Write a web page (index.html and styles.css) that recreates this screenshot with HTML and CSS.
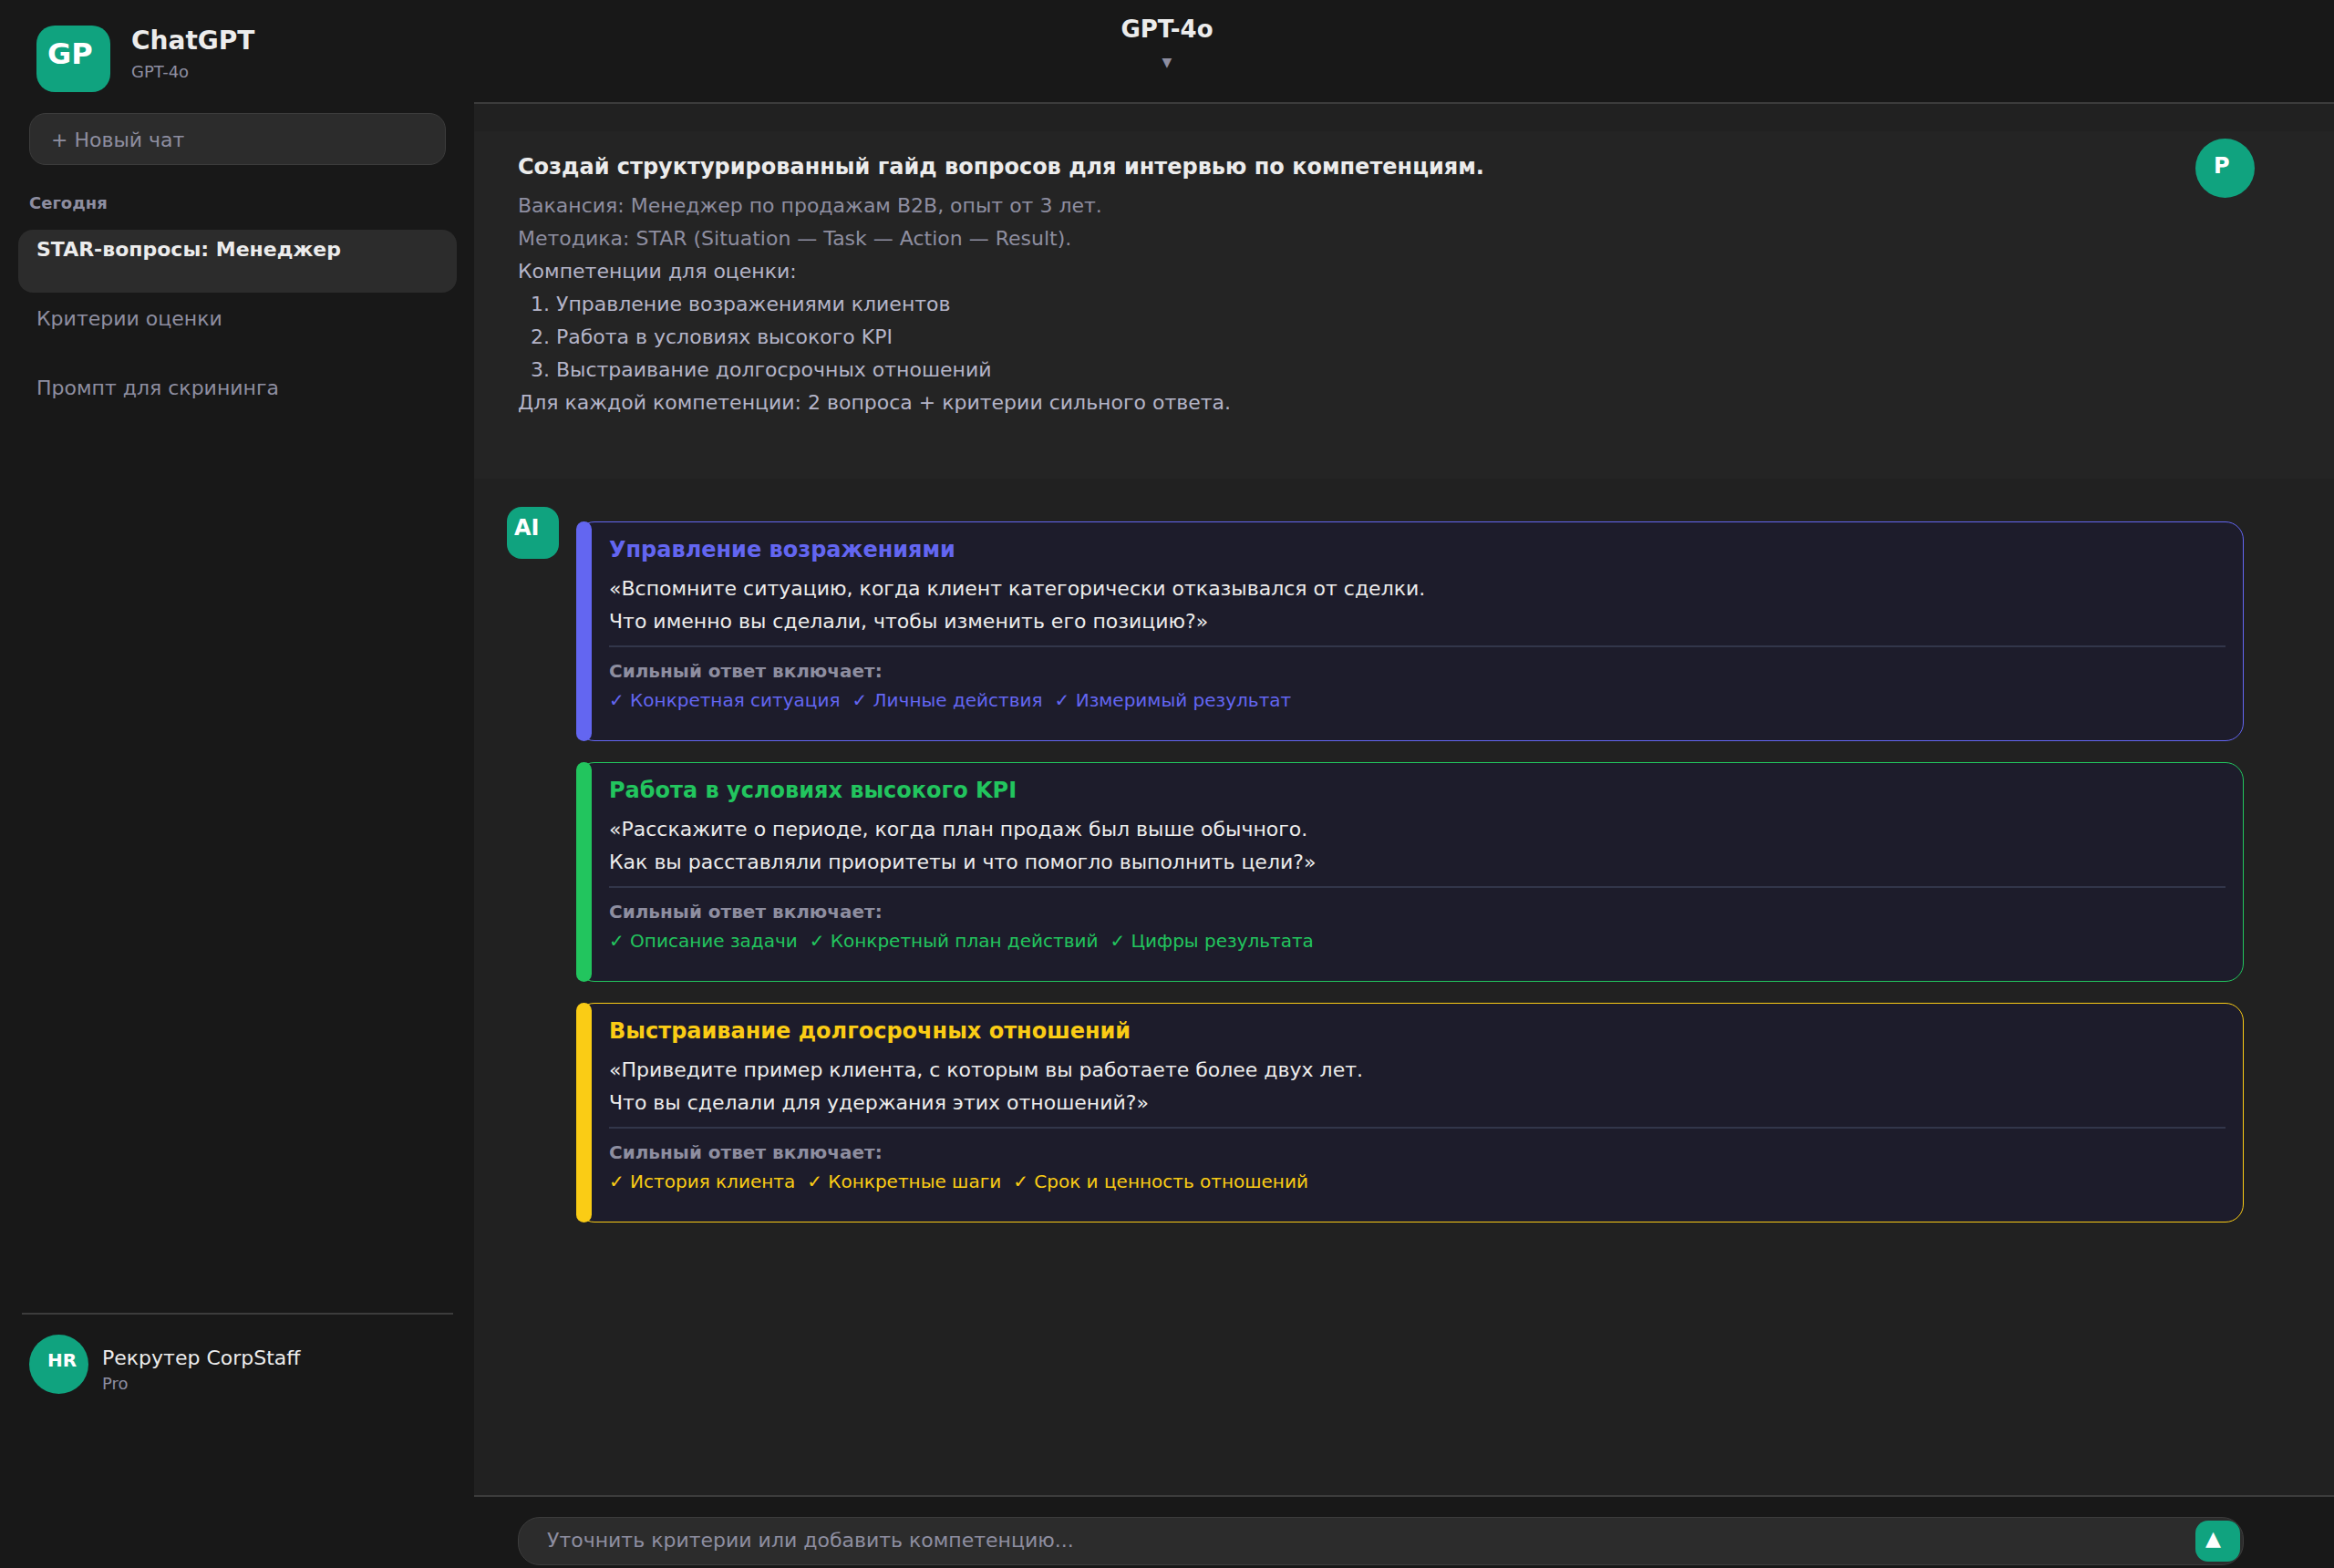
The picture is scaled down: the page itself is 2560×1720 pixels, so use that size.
FILE: index.html
```html
<!DOCTYPE html>
<html lang="ru">
<head>
<meta charset="utf-8">
<title>ChatGPT</title>
<link rel="stylesheet" href="styles.css">
</head>
<body>
<div class="app">
  <aside class="sidebar">
    <div class="brand">
      <div class="logo">GP</div>
      <div class="brand-text">
        <h1 class="brand-name">ChatGPT</h1>
        <p class="caption">GPT-4o</p>
      </div>
    </div>
    <button class="new-chat" type="button">+ Новый чат</button>
    <h2 class="group-title">Сегодня</h2>
    <nav class="chats">
      <a class="chat chat-active" href="#star">STAR-вопросы: Менеджер</a>
      <a class="chat" href="#criteria">Критерии оценки</a>
      <a class="chat" href="#screening">Промпт для скрининга</a>
    </nav>
    <div class="account">
      <div class="avatar avatar-account">HR</div>
      <div class="account-text">
        <p class="account-name">Рекрутер CorpStaff</p>
        <p class="caption">Pro</p>
      </div>
    </div>
  </aside>

  <main class="main">
    <header class="topbar">
      <button class="model" type="button">
        <span class="model-name">GPT-4o</span>
        <span class="model-arrow">▼</span>
      </button>
    </header>

    <div class="thread">
      <section class="prompt">
        <div class="prompt-text">
          <h2 class="prompt-title">Создай структурированный гайд вопросов для интервью по компетенциям.</h2>
          <p class="muted">Вакансия: Менеджер по продажам B2B, опыт от 3 лет.</p>
          <p class="muted">Методика: STAR (Situation — Task — Action — Result).</p>
          <p>Компетенции для оценки:</p>
          <ul class="prompt-list">
            <li>1. Управление возражениями клиентов</li>
            <li>2. Работа в условиях высокого KPI</li>
            <li>3. Выстраивание долгосрочных отношений</li>
          </ul>
          <p>Для каждой компетенции: 2 вопроса + критерии сильного ответа.</p>
        </div>
        <div class="avatar avatar-user">P</div>
      </section>

      <section class="answer">
        <div class="ai-badge">AI</div>
        <div class="cards">
          <article class="card indigo">
            <h3 class="card-title">Управление возражениями</h3>
            <p class="question">«Вспомните ситуацию, когда клиент категорически отказывался от сделки.<br>Что именно вы сделали, чтобы изменить его позицию?»</p>
            <h4 class="card-label">Сильный ответ включает:</h4>
            <ul class="checks">
              <li>✓ Конкретная ситуация</li>
              <li>✓ Личные действия</li>
              <li>✓ Измеримый результат</li>
            </ul>
          </article>
          <article class="card green">
            <h3 class="card-title">Работа в условиях высокого KPI</h3>
            <p class="question">«Расскажите о периоде, когда план продаж был выше обычного.<br>Как вы расставляли приоритеты и что помогло выполнить цели?»</p>
            <h4 class="card-label">Сильный ответ включает:</h4>
            <ul class="checks">
              <li>✓ Описание задачи</li>
              <li>✓ Конкретный план действий</li>
              <li>✓ Цифры результата</li>
            </ul>
          </article>
          <article class="card yellow">
            <h3 class="card-title">Выстраивание долгосрочных отношений</h3>
            <p class="question">«Приведите пример клиента, с которым вы работаете более двух лет.<br>Что вы сделали для удержания этих отношений?»</p>
            <h4 class="card-label">Сильный ответ включает:</h4>
            <ul class="checks">
              <li>✓ История клиента</li>
              <li>✓ Конкретные шаги</li>
              <li>✓ Срок и ценность отношений</li>
            </ul>
          </article>
        </div>
      </section>
    </div>

    <form class="composer">
      <div class="field">
        <input class="field-input" type="text" aria-label="Сообщение" placeholder="Уточнить критерии или добавить компетенцию...">
        <button class="send" type="button" aria-label="Отправить">▲</button>
      </div>
    </form>
  </main>
</div>
</body>
</html>
```
FILE: styles.css
```css
* {
  box-sizing: border-box;
}

body,
h1,
h2,
h3,
h4,
p,
ul {
  margin: 0;
  padding: 0;
}

ul {
  list-style: none;
}

body,
button,
input {
  font-family: "DejaVu Sans", sans-serif;
  font-size: 22px;
}

body {
  background: #212121;
  color: #ececec;
  line-height: 36px;
}

.app {
  display: grid;
  grid-template-columns: 520px 1fr;
  min-height: 100vh;
}

/* Sidebar */

.sidebar {
  display: flex;
  flex-direction: column;
  padding: 28px 19px 190px 20px;
  background: #181818;
}

.brand {
  display: flex;
  gap: 23px;
  padding: 0 20px;
}

.logo {
  width: 81px;
  height: 73px;
  padding: 13px 12px;
  border-radius: 20px;
  background: #10a37f;
  color: #fff;
  font-size: 32px;
  font-weight: bold;
  line-height: 36px;
}

.brand-text {
  padding-top: 1px;
}

.brand-name {
  font-size: 28px;
  line-height: 32px;
}

.caption {
  padding-top: 2px;
  color: #8e8ea0;
  font-size: 18px;
  line-height: 24px;
}

.brand-name + .caption {
  padding-top: 6px;
}

.new-chat {
  height: 57px;
  margin: 23px 12px 0;
  padding: 2px 23px 0;
  border: 1px solid #3c3c3c;
  border-radius: 18px;
  background: #2c2c2c;
  color: #8e8ea0;
  text-align: left;
}

.group-title {
  margin: 30px 12px 0;
  color: #8e8ea0;
  font-size: 18px;
  line-height: 24px;
}

.chats {
  display: grid;
  gap: 7px;
  margin-top: 17px;
}

.chat {
  height: 69px;
  padding: 8px 20px;
  border-radius: 16px;
  color: #8e8ea0;
  line-height: 28px;
  text-decoration: none;
}

.chat-active {
  background: #2c2c2c;
  color: #ececec;
  font-weight: bold;
}

.account {
  display: flex;
  gap: 15px;
  margin: auto 4px 0;
  padding: 22px 8px 0;
  border-top: 2px solid #3c3c3c;
}

.avatar {
  flex: none;
  width: 65px;
  height: 65px;
  padding: 20px;
  border-radius: 50%;
  background: #10a37f;
  color: #fff;
  font-weight: bold;
}

.avatar-account {
  font-size: 20px;
  line-height: 16px;
}

.account-text {
  padding-top: 12px;
}

.account-name {
  line-height: 28px;
}

/* Top bar */

.main {
  display: flex;
  flex-direction: column;
}

.topbar {
  display: flex;
  justify-content: center;
  height: 114px;
  padding-right: 520px;
  border-bottom: 2px solid #3c3c3c;
  background: #181818;
}

.model {
  display: flex;
  flex-direction: column;
  align-items: center;
  gap: 8px;
  padding: 16px 0;
  border: 0;
  background: none;
  color: #ececec;
}

.model-name {
  font-size: 26px;
  font-weight: bold;
  line-height: 32px;
}

.model-arrow {
  color: #8e8ea0;
  font-size: 14px;
  line-height: 24px;
}

/* Conversation */

.thread {
  flex: 1;
  padding-top: 30px;
}

.prompt {
  display: flex;
  justify-content: space-between;
  padding: 8px 87px 65px 48px;
  background: #242424;
  color: #b4b4c8;
}

.prompt-text {
  padding-top: 13px;
}

.prompt-title {
  padding-bottom: 7px;
  color: #ececec;
  font-size: 24px;
  line-height: 36px;
}

.muted {
  color: #8e8ea0;
}

.prompt-list {
  padding-left: 14px;
}

.avatar-user {
  font-size: 24px;
  line-height: 20px;
}

.answer {
  display: flex;
  gap: 19px;
  padding: 31px 99px 40px 36px;
}

.ai-badge {
  flex: none;
  width: 57px;
  height: 57px;
  padding: 9px 8px;
  border-radius: 16px;
  background: #10a37f;
  color: #fff;
  font-size: 24px;
  font-weight: bold;
  line-height: 28px;
}

.cards {
  flex: 1;
  display: grid;
  gap: 23px;
  padding-top: 16px;
}

.card {
  position: relative;
  padding: 14px 19px 28px 35px;
  border: 1px solid var(--accent);
  border-radius: 20px;
  background: #1d1c2b;
}

.card::before {
  content: "";
  position: absolute;
  inset: -1px auto -1px -1px;
  width: 17px;
  border-radius: 9px;
  background: var(--accent);
}

.indigo {
  --accent: #6366f1;
}

.green {
  --accent: #22c55e;
}

.yellow {
  --accent: #facc15;
}

.card-title {
  padding-bottom: 9px;
  color: var(--accent);
  font-size: 24px;
  line-height: 32px;
}

.question {
  padding-bottom: 8px;
  border-bottom: 2px solid #32364a;
}

.card-label {
  padding-top: 10px;
  color: #8e8ea0;
  font-size: 20px;
  line-height: 32px;
}

.checks {
  display: flex;
  gap: 13px;
  color: var(--accent);
  font-size: 20px;
  line-height: 32px;
}

/* Message field */

.composer {
  padding: 22px 99px 3px 48px;
  border-top: 2px solid #3c3c3c;
  background: #181818;
}

.field {
  display: flex;
  padding: 3px;
  border: 1px solid #3c3c3c;
  border-radius: 24px;
  background: #2c2c2c;
}

.field-input {
  flex: 1;
  padding: 0 28px 2px;
  border: 0;
  outline: 0;
  background: none;
  color: #ececec;
}

.field-input::placeholder {
  color: #8e8ea0;
  opacity: 1;
}

.send {
  width: 49px;
  height: 45px;
  padding: 0 11px 7px;
  border: 0;
  border-radius: 14px;
  background: #10a37f;
  color: #fff;
  text-align: left;
}
```
